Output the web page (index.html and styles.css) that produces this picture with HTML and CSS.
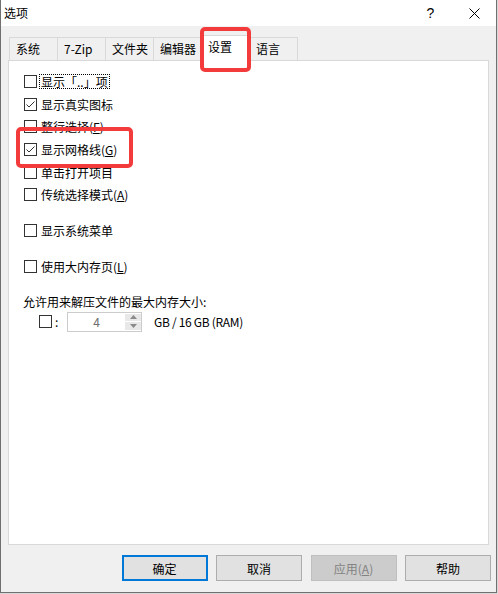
FILE: index.html
```html
<!DOCTYPE html>
<html lang="zh-CN">
<head>
<meta charset="utf-8">
<title>选项</title>
<link rel="stylesheet" href="styles.css">
</head>
<body>
<div class="window">
  <div class="titlebar">
    <span class="title">选项</span>
    <span class="tb-btn tb-help">?</span>
    <span class="tb-btn tb-close">
      <svg width="11" height="11" viewBox="0 0 11 11"><path d="M0.5 0.5 L10.5 10.5 M10.5 0.5 L0.5 10.5" stroke="#000" stroke-width="1" fill="none"/></svg>
    </span>
  </div>
  <div class="client">
    <div class="tabs">
      <div class="tab">系统</div>
      <div class="tab">7-Zip</div>
      <div class="tab">文件夹</div>
      <div class="tab">编辑器</div>
      <div class="tab selected">设置</div>
      <div class="tab">语言</div>
    </div>
    <div class="panel">
      <div class="row"><span class="cb"></span><span class="label focus">显示「..」项</span></div>
      <div class="row"><span class="cb checked"><svg width="11" height="11" viewBox="0 0 11 11"><path d="M1.5 5.5 L4 8 L9.5 2.5" stroke="#333" stroke-width="1" fill="none"/></svg></span><span class="label">显示真实图标</span></div>
      <div class="row"><span class="cb"></span><span class="label">整行选择(<u>F</u>)</span></div>
      <div class="row"><span class="cb checked"><svg width="11" height="11" viewBox="0 0 11 11"><path d="M1.5 5.5 L4 8 L9.5 2.5" stroke="#333" stroke-width="1" fill="none"/></svg></span><span class="label">显示网格线(<u>G</u>)</span></div>
      <div class="row"><span class="cb"></span><span class="label">单击打开项目</span></div>
      <div class="row"><span class="cb"></span><span class="label">传统选择模式(<u>A</u>)</span></div>
      <div class="row gap-a"><span class="cb"></span><span class="label">显示系统菜单</span></div>
      <div class="row gap-b"><span class="cb"></span><span class="label">使用大内存页(<u>L</u>)</span></div>
      <div class="row gap-c"><span class="plain">允许用来解压文件的最大内存大小:</span></div>
      <div class="mem-row">
        <span class="cb"></span>
        <span class="colon">:</span>
        <span class="spin">
          <span class="spin-val">4</span>
          <span class="spin-btns">
            <span class="spin-up"><svg width="7" height="4" viewBox="0 0 7 4"><path d="M0 4 L3.5 0 L7 4 Z" fill="#8a8a8a"/></svg></span>
            <span class="spin-down"><svg width="7" height="4" viewBox="0 0 7 4"><path d="M0 0 L3.5 4 L7 0 Z" fill="#8a8a8a"/></svg></span>
          </span>
        </span>
        <span class="mem-text">GB / 16 GB (RAM)</span>
      </div>
    </div>
    <div class="buttons">
      <div class="btn default">确定</div>
      <div class="btn">取消</div>
      <div class="btn disabled">应用(<u>A</u>)</div>
      <div class="btn">帮助</div>
    </div>
  </div>
  <div class="mark mark-tab"></div>
  <div class="mark mark-grid"></div>
</div>
</body>
</html>
```

FILE: styles.css
```css
html, body {
  margin: 0;
  padding: 0;
}
body {
  width: 498px;
  height: 594px;
  overflow: hidden;
  background: #d8d8d8;
  font-family: "Noto Sans CJK SC", "Noto Sans", sans-serif;
  font-size: 12px;
  color: #000;
}
.window {
  position: relative;
  width: 497px;
  height: 593px;
  box-sizing: border-box;
  border: 1px solid #707070;
  border-top: none;
  background: #f0f0f0;
  display: flex;
  flex-direction: column;
}
.titlebar {
  height: 26px;
  flex-shrink: 0;
  background: #fff;
  display: flex;
  align-items: center;
  padding-left: 3px;
}
.title {
  flex: 1;
  line-height: 14px;
}
.tb-btn {
  height: 26px;
  display: flex;
  align-items: center;
  justify-content: center;
}
.tb-help {
  width: 45px;
  font-size: 14px;
  font-family: "Liberation Sans", sans-serif;
}
.tb-close {
  width: 43px;
}
.client {
  flex: 1;
  display: flex;
  flex-direction: column;
  padding: 0 7px;
}
.tabs {
  height: 34px;
  display: flex;
  align-items: flex-end;
  padding-left: 1px;
}
.tab {
  width: 49px;
  height: 23px;
  box-sizing: border-box;
  border: 1px solid #d9d9d9;
  border-bottom: none;
  margin-right: -1px;
  padding-left: 6px;
  line-height: 22px;
  background: #f0f0f0;
  white-space: nowrap;
}
.tab.selected {
  height: 26px;
  margin-bottom: -1px;
  background: #fff;
  position: relative;
  z-index: 1;
  line-height: 21px;
}
.panel {
  height: 485px;
  box-sizing: border-box;
  border: 1px solid #d9d9d9;
  background: #fff;
  padding: 9px 0 0 15px;
}
.row {
  display: flex;
  align-items: center;
  height: 22.7px;
}
.gap-a { margin-top: 13px; }
.gap-b { margin-top: 13px; }
.gap-c { margin-top: 12.5px; }
.cb {
  width: 13px;
  height: 13px;
  box-sizing: border-box;
  border: 1px solid #333;
  background: #fff;
  flex-shrink: 0;
  margin-right: 2px;
  display: flex;
  align-items: center;
  justify-content: center;
}
.cb svg { display: block; }
.label {
  border: 1px dotted transparent;
  padding: 0 1px 0 1px;
  line-height: 13px;
  white-space: nowrap;
}
.label.focus {
  border-color: #000;
}
.plain {
  white-space: nowrap;
  margin-left: -1px;
}
.mem-row {
  display: flex;
  align-items: center;
  height: 20px;
  margin-top: -1px;
  padding-left: 15px;
}
.colon {
  margin-left: 1px;
  width: 10px;
}
.spin {
  width: 75px;
  height: 20px;
  box-sizing: border-box;
  border: 1px solid #cccccc;
  background: #fff;
  display: flex;
  margin-left: 2px;
}
.spin-val {
  flex: 1;
  text-align: center;
  color: #6d6d6d;
  line-height: 18px;
}
.spin-btns {
  width: 16px;
  display: flex;
  flex-direction: column;
  gap: 1px;
  padding: 1px 0 1px 0;
  box-sizing: border-box;
}
.spin-up, .spin-down {
  flex: 1;
  background: #e8e8e8;
  display: flex;
  align-items: center;
  justify-content: center;
}
.spin-up svg, .spin-down svg { display: block; }
.mem-text {
  margin-left: 12px;
  white-space: nowrap;
  letter-spacing: -0.3px;
}
.buttons {
  display: flex;
  justify-content: flex-end;
  gap: 8.5px;
  margin-top: 10px;
  margin-right: -2px;
}
.btn {
  width: 86px;
  height: 26px;
  box-sizing: border-box;
  border: 1px solid #adadad;
  background: #e1e1e1;
  display: flex;
  align-items: center;
  justify-content: center;
}
.btn.default {
  border: 2px solid #0078d7;
}
.btn.disabled {
  background: #cccccc;
  border-color: #bfbfbf;
  color: #838383;
}
.mark {
  position: absolute;
  box-sizing: border-box;
  border: 4px solid #f43b3b;
  border-radius: 5px;
  z-index: 5;
}
.mark-tab {
  left: 199px;
  top: 27px;
  width: 51px;
  height: 45px;
}
.mark-grid {
  left: 15px;
  top: 127px;
  width: 117px;
  height: 41px;
}
```
